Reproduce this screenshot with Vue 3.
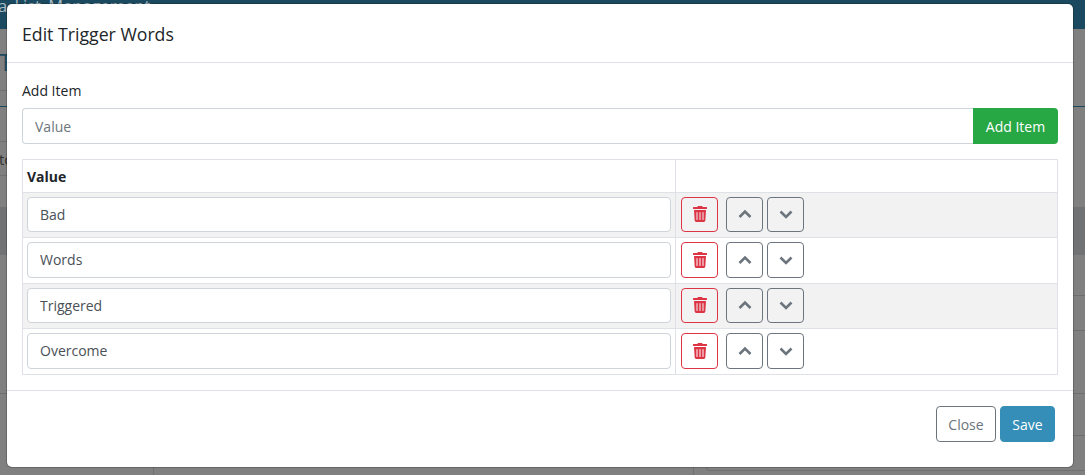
<script setup>
const rows = ['Bad', 'Words', 'Triggered', 'Overcome']
</script>

<template>
  <div class="page">
    <div class="under">
      <header class="topbar"><span class="title">Data List Management</span></header>
      <div class="tabs"><span class="tab">T</span></div>
      <div class="tabline"></div>
      <div class="toolbar"></div>
      <div class="filter"><span class="to">to</span></div>
      <div class="gap"></div>
      <div class="band"></div>
      <div class="rowline r1"></div>
      <div class="rowline r2"></div>
      <div class="rowline r3"></div>
      <div class="rowline r4"></div>
      <div class="foot">
        <div class="vl v1"></div>
        <div class="vl v2"></div>
        <div class="foot-box"></div>
      </div>
    </div>
    <div class="modal">
      <div class="m-head"><h5>Edit Trigger Words</h5></div>
      <div class="m-body">
        <label class="lbl">Add Item</label>
        <div class="group">
          <input class="ctl grow" placeholder="Value" />
          <button class="add">Add Item</button>
        </div>
        <table>
          <thead>
            <tr><th class="c1">Value</th><th></th></tr>
          </thead>
          <tbody>
            <tr v-for="(r, i) in rows" :key="r" :class="{ odd: i % 2 === 0 }">
              <td class="c1"><input class="ctl" :value="r" /></td>
              <td class="c2">
                <div class="acts">
                  <button class="ib del">
                    <svg width="14" height="16" viewBox="0 0 448 512"><path fill="currentColor" d="M432 32H312l-9.400-18.700A24 24 0 0 0 281.100 0H166.800a23.700 23.700 0 0 0-21.400 13.300L136 32H16A16 16 0 0 0 0 48v32a16 16 0 0 0 16 16h416a16 16 0 0 0 16-16V48a16 16 0 0 0-16-16zM53.200 467a48 48 0 0 0 47.900 45h245.800a48 48 0 0 0 47.900-45L416 128H32zM304 208a16 16 0 0 1 32 0v224a16 16 0 0 1-32 0zm-96 0a16 16 0 0 1 32 0v224a16 16 0 0 1-32 0zm-96 0a16 16 0 0 1 32 0v224a16 16 0 0 1-32 0z"/></svg>
                  </button>
                  <button class="ib mv first">
                    <svg width="14" height="14" viewBox="0 0 14 14"><path d="M1.500 10 7 4.500 12.500 10" fill="none" stroke="currentColor" stroke-width="2.600"/></svg>
                  </button>
                  <button class="ib mv">
                    <svg width="14" height="14" viewBox="0 0 14 14"><path d="M1.500 4.500 7 10 12.500 4.500" fill="none" stroke="currentColor" stroke-width="2.600"/></svg>
                  </button>
                </div>
              </td>
            </tr>
          </tbody>
        </table>
      </div>
      <div class="m-foot">
        <button class="fbtn close">Close</button>
        <button class="fbtn save">Save</button>
      </div>
    </div>
  </div>
</template>

<style>
html, body { margin: 0; background: #808080; overflow: hidden; }
</style>

<style scoped>
.page {
  position: relative;
  width: 1085px;
  height: 475px;
  overflow: hidden;
  background: #808080;
  font-family: "Open Sans", "Noto Sans", sans-serif;
  font-size: 14px;
  color: #212529;
}
.under { display: flex; flex-direction: column; height: 475px; }
.topbar { height: 29px; flex: none; background: #1b4a60; overflow: hidden; }
.title { display: block; margin: -6px 0 0 -29px; color: #a9bac3; font-size: 16.500px; line-height: 24px; word-spacing: 3px; white-space: nowrap; }
.tabs { height: 62px; flex: none; box-sizing: border-box; border-bottom: 1px solid #707070; overflow: hidden; width: 100px; }
.tab { display: block; margin: 19px 0 0 -1px; font-size: 24px; line-height: 28px; color: #1b4a60; }
.tabline { height: 16px; flex: none; box-sizing: border-box; border-bottom: 1px solid #1b4a60; }
.toolbar { height: 35px; flex: none; width: 100px; box-sizing: border-box; border-bottom: 1px solid #707070; }
.filter { height: 34px; flex: none; width: 100px; box-sizing: border-box; border-bottom: 1px solid #707070; overflow: hidden; }
.to { display: block; margin: 6px 0 0 -1px; font-size: 15px; line-height: 22px; color: #333; }
.gap { height: 31px; flex: none; }
.band { height: 48px; flex: none; background: #717274; }
.rowline { flex: none; box-sizing: border-box; border-bottom: 1px solid #6e6e6e; }
.r1 { height: 41px; margin-left: 700px; }
.r2 { height: 35px; margin-left: 700px; }
.r3 { height: 63px; }
.r4 { height: 42px; margin-left: 700px; }
.foot { flex: 1; position: relative; }
.vl { position: absolute; top: 0; bottom: 0; width: 1px; background: #707070; }
.v1 { left: 153px; }
.v2 { left: 693px; }
.foot-box { position: absolute; left: 706px; right: 0; top: 25px; height: 9px; border: 1px solid #707070; border-width: 0 0 1px 1px; border-radius: 0 0 0 4px; }
.modal {
  position: absolute;
  left: 7px; top: 4px;
  width: 1066px; height: 463px;
  box-sizing: border-box;
  background: #fff;
  border-radius: 5px;
  box-shadow: 0 0 0 1px rgba(0, 0, 0, .2);
  display: flex; flex-direction: column;
}
.m-head { height: 59px; box-sizing: border-box; border-bottom: 1px solid #dee2e6; padding: 0 15px; display: flex; align-items: center; }
h5 { margin: 0; font-size: 17.700px; font-weight: 400; line-height: 1.500; position: relative; top: 1px; }
.m-body { padding: 17px 15px 0; flex: 1; box-sizing: border-box; }
.lbl { display: block; font-size: 14px; line-height: 21px; margin-bottom: 7px; }
.group { display: flex; height: 36px; margin-bottom: 15px; }
.ctl {
  display: block; box-sizing: border-box; width: 100%; height: 100%;
  border: 1px solid #ced4da; border-radius: 4px; padding: 0 12px;
  font: inherit; color: #495057; background: #fff; outline: none;
}
.ctl::placeholder { color: #6c757d; }
.grow { flex: 1; border-radius: 4px 0 0 4px; border-right: 0; }
.add { width: 85px; border: 0; background: #28a745; color: #fff; font: inherit; border-radius: 0 4px 4px 0; padding: 0; }
table { width: 1036px; border-collapse: collapse; table-layout: fixed; }
th, td { border: 1px solid #dee2e6; padding: 0; }
thead th { height: 32.500px; text-align: left; font-weight: 700; padding: 1px 0 0 4px; box-sizing: border-box; }
th.c1, td.c1 { width: 653px; }
td { padding: 4px 4px 5px; box-sizing: border-box; }
td.c1 .ctl { height: 35.500px; }
td.c2 { padding-left: 5px; }
.odd td { background: #f2f2f2; }
.acts { display: flex; align-items: center; }
.ib {
  width: 37px; height: 35.500px; padding: 0; box-sizing: border-box;
  background: transparent; border-radius: 4px; border: 1px solid;
  display: flex; align-items: center; justify-content: center;
}
.del { color: #dc3545; border-color: #dc3545; }
.mv { color: #6c757d; border-color: #6c757d; margin-left: 4px; }
.mv.first { margin-left: 8px; }
.m-foot { height: 77px; box-sizing: border-box; border-top: 1px solid #dee2e6; display: flex; justify-content: flex-end; align-items: center; gap: 4px; padding: 0 18px 10px 0; }
.fbtn { height: 36px; box-sizing: border-box; border-radius: 4px; font: inherit; padding: 0; }
.close { width: 60px; background: #fff; color: #6c757d; border: 1px solid #6c757d; }
.save { width: 55px; background: #358eb7; color: #fff; border: 1px solid #358eb7; }
</style>
